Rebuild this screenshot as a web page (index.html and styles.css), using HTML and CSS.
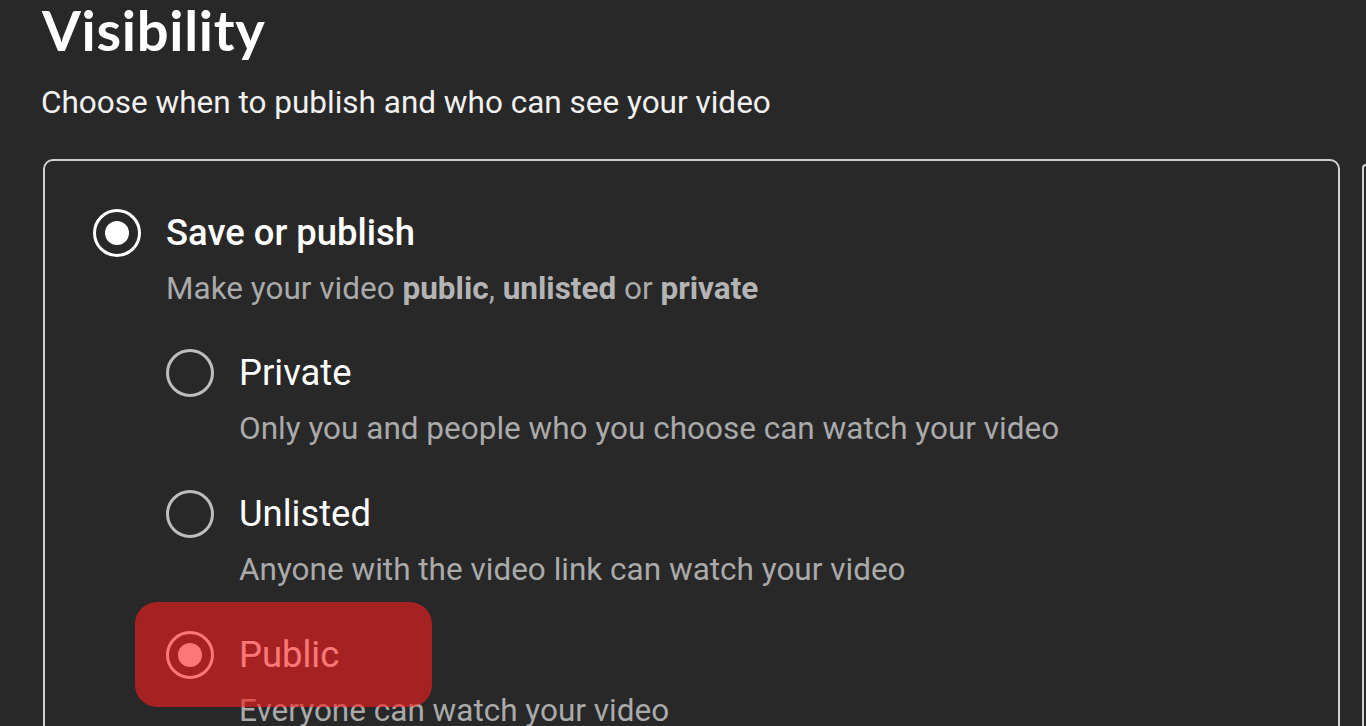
FILE: index.html
```html
<!DOCTYPE html>
<html lang="en">
<head>
    <meta charset="UTF-8">
    <meta name="viewport" content="width=device-width, initial-scale=1.0">
    <title>Visibility</title>
    <link rel="stylesheet" href="styles.css">
</head>
<body>
    <div class="page">
        <h1 class="page-title">Visibility</h1>
        <p class="page-subtitle">Choose when to publish and who can see your video</p>

        <div class="panels">
            <!-- Visibility options -->
            <div class="card">
                <div class="option">
                    <span class="radio checked"></span>
                    <div class="option-text">
                        <div class="option-title strong">Save or publish</div>
                        <div class="option-desc">Make your video <b>public</b>, <b>unlisted</b> or <b>private</b></div>
                    </div>
                </div>

                <div class="sub-options">
                    <div class="option">
                        <span class="radio"></span>
                        <div class="option-text">
                            <div class="option-title">Private</div>
                            <div class="option-desc">Only you and people who you choose can watch your video</div>
                        </div>
                    </div>
                    <div class="option">
                        <span class="radio"></span>
                        <div class="option-text">
                            <div class="option-title">Unlisted</div>
                            <div class="option-desc">Anyone with the video link can watch your video</div>
                        </div>
                    </div>
                    <div class="option">
                        <span class="radio checked"></span>
                        <div class="option-text">
                            <div class="option-title">Public</div>
                            <div class="option-desc">Everyone can watch your video</div>
                        </div>
                        <div class="highlight"></div>
                    </div>
                </div>
            </div>

            <div class="side-card"></div>
        </div>
    </div>
</body>
</html>
```

FILE: styles.css
```css
body {
    margin: 0;
    padding: 0;
    background-color: #282828;
    font-family: 'Roboto', 'Liberation Sans', sans-serif;
    color: #fff;
    overflow: hidden;
    height: 726px;
}

.page {
    padding: 0 0 0 42px;
}

.page-title {
    font-family: 'Lato', 'Noto Sans', sans-serif;
    font-weight: 700;
    font-size: 56px;
    line-height: 60px;
    letter-spacing: 0.7px;
    margin: 0;
    color: #fff;
}

.page-subtitle {
    font-size: 31.5px;
    line-height: 40px;
    margin: 23px 0 0 -1px;
    color: #f1f1f1;
}

.panels {
    display: flex;
    gap: 22px;
    margin-top: 36px;
    margin-left: 1px;
}

.card {
    flex: 0 0 1297px;
    box-sizing: border-box;
    border: 2px solid #d0d0d0;
    border-radius: 10px;
    padding: 48px 48px 40px;
    min-height: 620px;
}

.side-card {
    flex: 1;
    margin-top: 5px;
    border-left: 2px solid #cfcfcf;
    border-top: 2px solid #cfcfcf;
    border-top-left-radius: 8px;
}

.option {
    position: relative;
    display: flex;
    align-items: flex-start;
    gap: 25px;
}

.sub-options {
    margin-left: 73px;
    margin-top: 40px;
    display: flex;
    flex-direction: column;
    gap: 41px;
}

.radio {
    flex: 0 0 auto;
    width: 48px;
    height: 48px;
    box-sizing: border-box;
    border: 3px solid #bdbdbd;
    border-radius: 50%;
    display: flex;
    align-items: center;
    justify-content: center;
}

.radio.checked {
    border-color: #fff;
}

.radio.checked::after {
    content: "";
    width: 24px;
    height: 24px;
    border-radius: 50%;
    background-color: #fff;
}

.option-title {
    font-size: 36.4px;
    line-height: 48px;
    color: #fff;
}

.option-title.strong {
    font-weight: 500;
}

.option-desc {
    font-size: 31.5px;
    line-height: 40px;
    margin-top: 12px;
    color: #aaa;
}

.option-desc b {
    font-weight: 700;
    color: #b4b4b4;
}

/* red marker drawn over the Public choice */
.highlight {
    position: absolute;
    left: -31px;
    top: -29px;
    width: 297px;
    height: 105px;
    border-radius: 22px;
    background-color: rgba(250, 30, 30, 0.6);
}
```
